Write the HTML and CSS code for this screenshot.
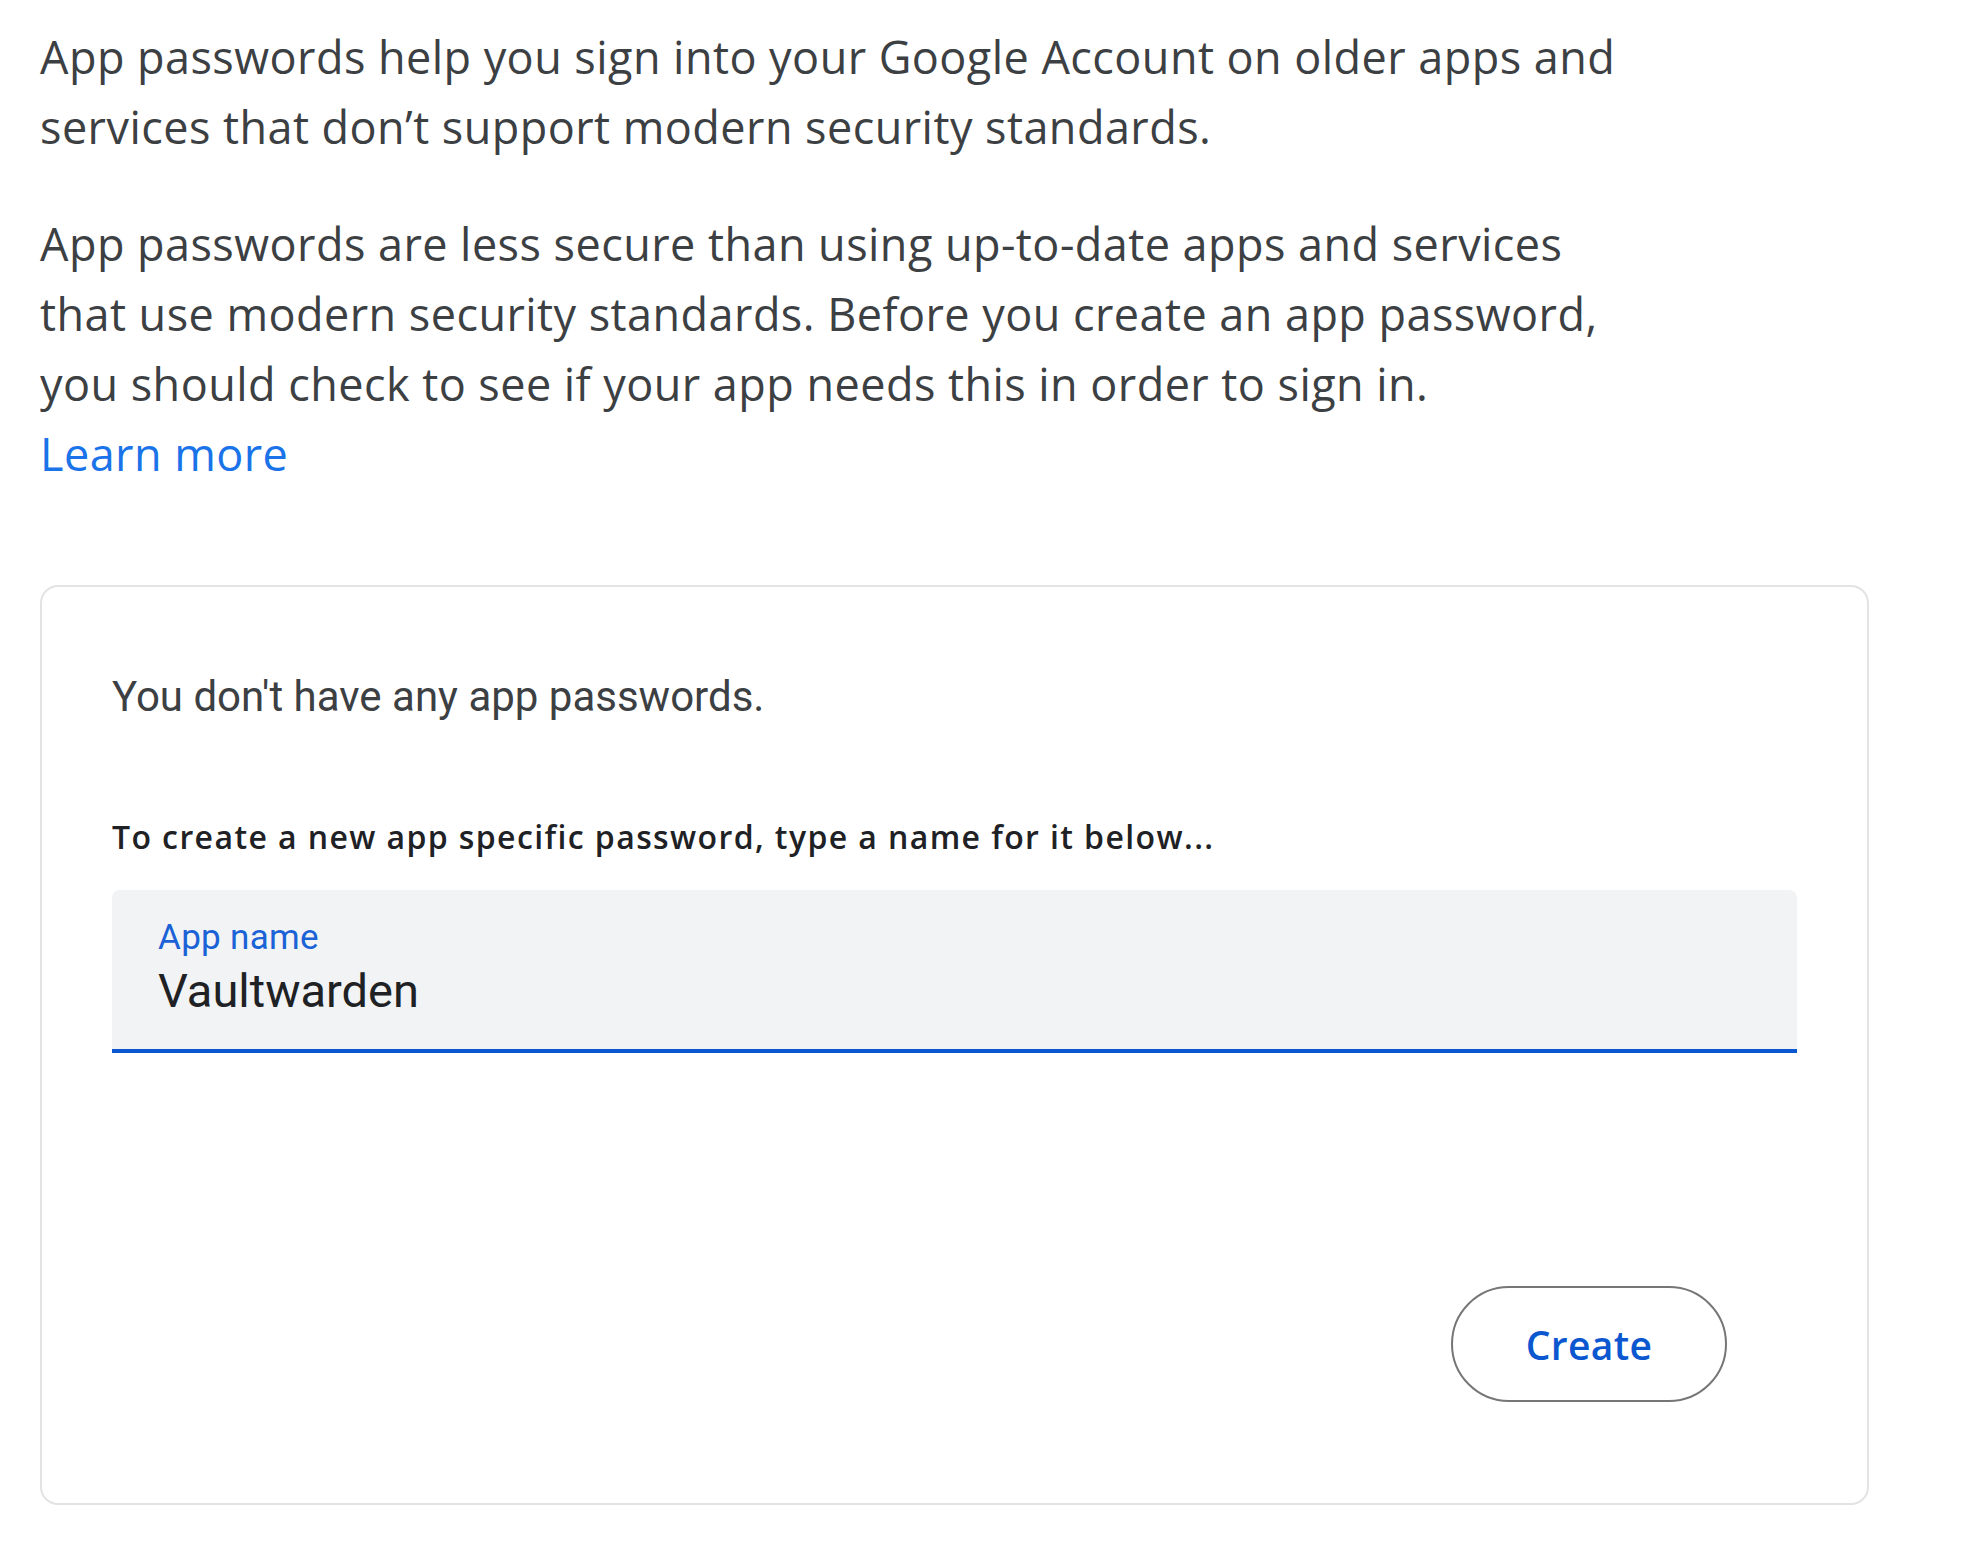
FILE: index.html
```html
<!DOCTYPE html>
<html lang="en">
<head>
<meta charset="utf-8">
<title>App passwords</title>
<link rel="stylesheet" href="styles.css">
</head>
<body>
<main class="page">
  <p class="intro intro-first">App passwords help you sign into your Google Account on older apps and services that don’t support modern security standards.</p>
  <p class="intro">App passwords are less secure than using up-to-date apps and services that use modern security standards. Before you create an app password, you should check to see if your app needs this in order to sign in.<br><a class="learn" href="#">Learn more</a></p>

  <section class="card">
    <p class="empty">You don't have any app passwords.</p>
    <p class="hint">To create a new app specific password, type a name for it below...</p>
    <div class="field">
      <label class="field-label" for="appname">App name</label>
      <input class="field-input" id="appname" type="text" value="Vaultwarden">
    </div>
    <div class="actions">
      <button class="btn-create" type="button">Create</button>
    </div>
  </section>
</main>
</body>
</html>
```

FILE: styles.css
```css
html, body {
  margin: 0;
  padding: 0;
  background: #ffffff;
}

.page {
  padding: 0 40px;
  font-family: "Open Sans", "Noto Sans", sans-serif;
}

.intro {
  max-width: 1598px;
  margin: 0;
  font-size: 45px;
  line-height: 70px;
  letter-spacing: 0.45px;
  color: #3c4043;
}

.intro-first {
  padding-top: 22px;
  margin-bottom: 47px;
}

.learn {
  color: #1a73e8;
  text-decoration: none;
}

.card {
  margin-top: 96px;
  width: 1829px;
  height: 920px;
  box-sizing: border-box;
  border: 2px solid #e3e3e3;
  border-radius: 18px;
  padding: 0 70px;
  display: flex;
  flex-direction: column;
  font-family: Roboto, "Noto Sans", sans-serif;
}

.empty {
  margin: 82px 0 0;
  font-size: 42px;
  line-height: 56px;
  color: #3c4043;
}

.hint {
  margin: 92px 0 0;
  font-family: "Open Sans", "Noto Sans", sans-serif;
  font-size: 32px;
  line-height: 40px;
  font-weight: 600;
  color: #202124;
  letter-spacing: 1.4px;
}

.field {
  margin-top: 33px;
  height: 163px;
  box-sizing: border-box;
  background: #f1f3f4;
  border-radius: 8px 8px 0 0;
  border-bottom: 4px solid #0b57d0;
  padding: 26px 46px 0;
  display: flex;
  flex-direction: column;
}

.field-label {
  font-size: 35px;
  line-height: 44px;
  color: #1a62d6;
  letter-spacing: 0.3px;
}

.field-input {
  margin-top: 2px;
  border: 0;
  padding: 0;
  background: transparent;
  font-family: Roboto, "Noto Sans", sans-serif;
  font-size: 47px;
  line-height: 58px;
  height: 58px;
  color: #202124;
  outline: none;
}

.actions {
  margin-top: 233px;
  display: flex;
  justify-content: flex-end;
  padding-right: 70px;
}

.btn-create {
  width: 276px;
  height: 116px;
  box-sizing: border-box;
  border: 2px solid #747775;
  border-radius: 58px;
  background: #ffffff;
  color: #0b57d0;
  font-family: "Open Sans", "Noto Sans", sans-serif;
  font-size: 39px;
  font-weight: 600;
  letter-spacing: 0.3px;
}
```
